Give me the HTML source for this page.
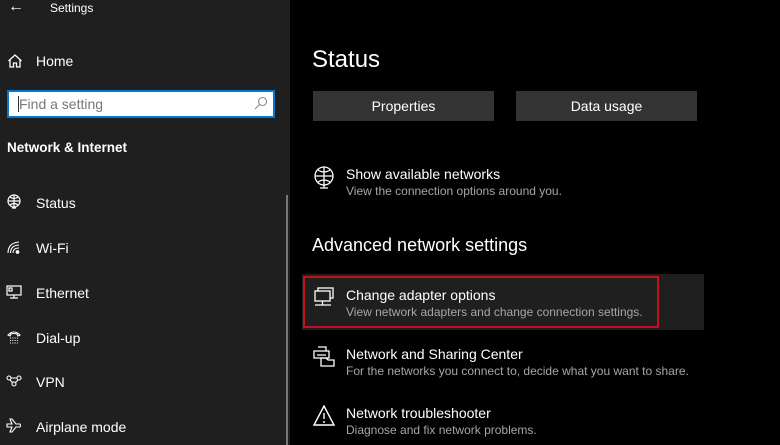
<!DOCTYPE html>
<html><head><meta charset="utf-8"><style>
*{margin:0;padding:0;box-sizing:border-box}
body{width:780px;height:445px;overflow:hidden;background:#000;font-family:"Liberation Sans",sans-serif;color:#fff;position:relative}
.side{position:absolute;left:0;top:0;width:290px;height:445px;background:#1f1f1f}
.t{position:absolute;white-space:nowrap}
.ic{position:absolute}
.btn{position:absolute;top:91px;height:30px;width:181px;background:#333;color:#fff;font-size:14px;text-align:center;line-height:30px}
.sub{color:#a6a6a6;font-size:12px}
</style></head><body>
<div class="side">
<div class="t" style="left:8px;top:-2px;font-size:16px">←</div>
<div class="t" style="left:50px;top:1px;font-size:12px">Settings</div>
<svg class="ic" style="left:7px;top:53px" width="16" height="16" viewBox="0 0 16 16" fill="none" stroke="#fff" stroke-width="1.3"><path d="M1.5 8 L8 2 L14.5 8 M3 6.5 V14 H6.5 V10 H9.5 V14 H13 V6.5"/></svg>
<div class="t" style="left:36px;top:53px;font-size:14px">Home</div>
<div style="position:absolute;left:7px;top:90px;width:268px;height:28px;border:2px solid #0078d7;background:#fff"></div>
<div style="position:absolute;left:18px;top:96px;width:1px;height:16px;background:#333"></div>
<div class="t" style="left:19px;top:96px;font-size:14px;color:#777">Find a setting</div>
<svg class="ic" style="left:254px;top:96px" width="14" height="14" viewBox="0 0 14 14" fill="none" stroke="#888" stroke-width="1.1"><circle cx="8.5" cy="5.5" r="4"/><path d="M5.5 8.5 L1 13"/></svg>
<div class="t" style="left:7px;top:140px;font-size:13.5px;font-weight:bold">Network &amp; Internet</div>
<svg class="ic" style="left:6px;top:194px" width="16" height="16" viewBox="0 0 16 16" fill="none" stroke="#fff" stroke-width="1.2"><circle cx="8" cy="7" r="6"/><path d="M2 7H14M8 1V13M4 3Q8 6 12 3M4 11Q8 8 12 11M6 14H10"/></svg>
<div class="t" style="left:36px;top:195px;font-size:14px">Status</div>
<svg class="ic" style="left:7px;top:241px" width="14" height="14" viewBox="0 0 14 14" fill="none" stroke="#fff" stroke-width="1.1"><path d="M1 12Q1 2 12 1M3.5 12Q3.5 4.5 12 4M6 12Q6 7 12 7"/><circle cx="10.5" cy="11" r="1.3" fill="#fff"/></svg>
<div class="t" style="left:36px;top:240px;font-size:14px">Wi-Fi</div>
<svg class="ic" style="left:6px;top:285px" width="16" height="14" viewBox="0 0 16 14" fill="none" stroke="#fff" stroke-width="1.2"><rect x="1" y="1" width="14" height="9"/><path d="M8 10V13M4 13H12M3 3H6V6H3Z"/></svg>
<div class="t" style="left:36px;top:285px;font-size:14px">Ethernet</div>
<svg class="ic" style="left:7px;top:330px" width="14" height="14" viewBox="0 0 14 14" fill="none" stroke="#fff" stroke-width="1.1"><path d="M1 5Q7 -1 13 5L11 6L10 4Q7 3 4 4L3 6Z"/><path d="M3 8H11M3 10.5H11M3 13H11" stroke-dasharray="1 1.3"/></svg>
<div class="t" style="left:36px;top:330px;font-size:14px">Dial-up</div>
<svg class="ic" style="left:6px;top:375px" width="16" height="12" viewBox="0 0 16 12" fill="none" stroke="#fff" stroke-width="1.1"><circle cx="3" cy="3" r="2"/><circle cx="13" cy="3" r="2"/><circle cx="8" cy="9" r="2"/><path d="M5 3H11M4 5L7 8M12 5L9 8"/></svg>
<div class="t" style="left:36px;top:374px;font-size:14px">VPN</div>
<svg class="ic" style="left:6px;top:418px" width="16" height="16" viewBox="0 0 16 16" fill="none" stroke="#fff" stroke-width="1.1"><path d="M1 6H6L4 1H6L10 6H14Q15 8 14 9H10L6 14H4L6 9H1Z"/></svg>
<div class="t" style="left:36px;top:419px;font-size:14px">Airplane mode</div>
<div style="position:absolute;left:286px;top:195px;width:2px;height:250px;background:#777"></div>
</div>
<div class="t" style="left:312px;top:46px;font-size:24px">Status</div>
<div class="btn" style="left:313px">Properties</div>
<div class="btn" style="left:516px">Data usage</div>
<svg class="ic" style="left:313px;top:166px" width="22" height="24" viewBox="0 0 22 24" fill="none" stroke="#fff" stroke-width="1.3"><circle cx="11" cy="10" r="9"/><path d="M2 10H20M11 1V19M5 4Q11 8 17 4M5 16Q11 12 17 16M7 22H15M11 19V22"/></svg>
<div class="t" style="left:346px;top:166px;font-size:14px">Show available networks</div>
<div class="t sub" style="left:346px;top:184px">View the connection options around you.</div>
<div class="t" style="left:312px;top:235px;font-size:18px">Advanced network settings</div>
<div style="position:absolute;left:302px;top:274px;width:402px;height:56px;background:#1f1f1f"></div>
<div style="position:absolute;left:303px;top:276px;width:356px;height:52px;border:2px solid #c50f1f"></div>
<svg class="ic" style="left:313px;top:287px" width="22" height="22" viewBox="0 0 22 22" fill="none" stroke="#fff" stroke-width="1.3"><rect x="5" y="1" width="15" height="10"/><rect x="2" y="4" width="15" height="10" fill="#1f1f1f"/><path d="M9.5 14V18M2 18H18"/></svg>
<div class="t" style="left:346px;top:287px;font-size:14px">Change adapter options</div>
<div class="t sub" style="left:346px;top:305px">View network adapters and change connection settings.</div>
<svg class="ic" style="left:313px;top:346px" width="22" height="22" viewBox="0 0 22 22" fill="none" stroke="#fff" stroke-width="1.3"><path d="M5 1H13V5M1 5H16V12H1Z M4 9H13"/><path d="M8 12V20H21V14H15L13 12Z"/></svg>
<div class="t" style="left:346px;top:346px;font-size:14px">Network and Sharing Center</div>
<div class="t sub" style="left:346px;top:364px">For the networks you connect to, decide what you want to share.</div>
<svg class="ic" style="left:313px;top:405px" width="22" height="22" viewBox="0 0 22 22" fill="none" stroke="#fff" stroke-width="1.4"><path d="M11 1L21 20H1Z M11 8V14 M11 16V18"/></svg>
<div class="t" style="left:346px;top:405px;font-size:14px">Network troubleshooter</div>
<div class="t sub" style="left:346px;top:423px">Diagnose and fix network problems.</div>
</body></html>
